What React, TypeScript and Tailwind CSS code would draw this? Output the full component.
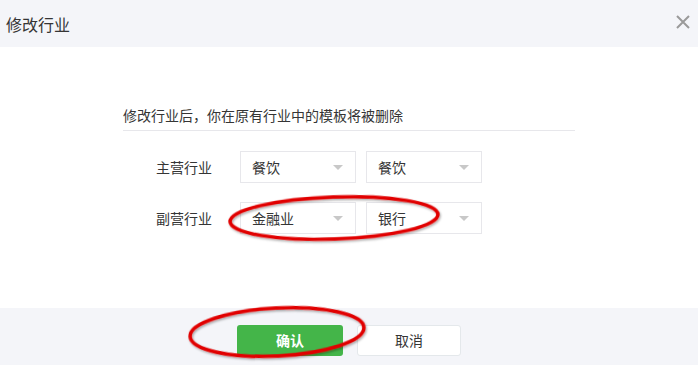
import React from "react";

const font = { fontFamily: '"Noto Sans CJK SC", "Microsoft YaHei", sans-serif' };

function Select({ value }: { value: string }) {
  return (
    <div className="w-[116px] h-[32px] border border-[#e7e7eb] bg-white flex items-center justify-between pl-[11px] pr-[12px] text-[14px] text-[#353535]">
      <span>{value}</span>
      <span className="w-0 h-0 border-l-[5px] border-r-[5px] border-t-[5px] border-l-transparent border-r-transparent border-t-[#c8c8c8]" />
    </div>
  );
}

export default function App() {
  return (
    <div className="relative w-[698px] h-[365px] bg-white overflow-hidden" style={font}>
      <div className="h-[47px] bg-[#f4f5f9] flex items-center justify-between pl-[6px] pr-[7px]">
        <span className="text-[16px] text-[#353535]">修改行业</span>
        <svg width="16" height="16" viewBox="0 0 16 16" className="mb-[3px]">
          <path d="M2 2 L14 14 M14 2 L2 14" stroke="#9a9a9a" strokeWidth="2" />
        </svg>
      </div>
      <div className="h-[261px] pt-[58px] pl-[123px]">
        <div className="w-[452px] border-b border-[#e7e7eb] pb-[5px] text-[14px] leading-[20px] text-[#353535]">
          修改行业后，你在原有行业中的模板将被删除
        </div>
        <div className="mt-[20px] flex flex-col gap-[19px]">
          <div className="flex items-center pl-[33px]">
            <span className="w-[84px] text-[14px] text-[#353535]">主营行业</span>
            <div className="flex gap-[10px]">
              <Select value="餐饮" />
              <Select value="餐饮" />
            </div>
          </div>
          <div className="flex items-center pl-[33px]">
            <span className="w-[84px] text-[14px] text-[#353535]">副营行业</span>
            <div className="flex gap-[10px]">
              <Select value="金融业" />
              <Select value="银行" />
            </div>
          </div>
        </div>
      </div>
      <div className="h-[57px] bg-[#f4f5f9] flex justify-center items-start pt-[17px] gap-[14px]">
        <button className="w-[106px] h-[31px] bg-[#44b549] rounded-[3px] text-white text-[14px] font-bold">确认</button>
        <button className="w-[104px] h-[31px] bg-white border border-[#e4e8eb] rounded-[3px] text-[#353535] text-[14px]">取消</button>
      </div>
      <svg className="absolute inset-0 pointer-events-none" width="698" height="365">
        <defs>
          <filter id="sh" x="-10%" y="-30%" width="120%" height="160%">
            <feDropShadow dx="1" dy="1.5" stdDeviation="1" floodColor="#000" floodOpacity="0.35" />
          </filter>
        </defs>
        <ellipse cx="334" cy="218" rx="104" ry="21" transform="rotate(-2 334 218)" fill="none" stroke="#e10000" strokeWidth="3.5" filter="url(#sh)" />
        <ellipse cx="277" cy="332" rx="87" ry="24" transform="rotate(-3 277 332)" fill="none" stroke="#e10000" strokeWidth="3.5" filter="url(#sh)" />
      </svg>
    </div>
  );
}
